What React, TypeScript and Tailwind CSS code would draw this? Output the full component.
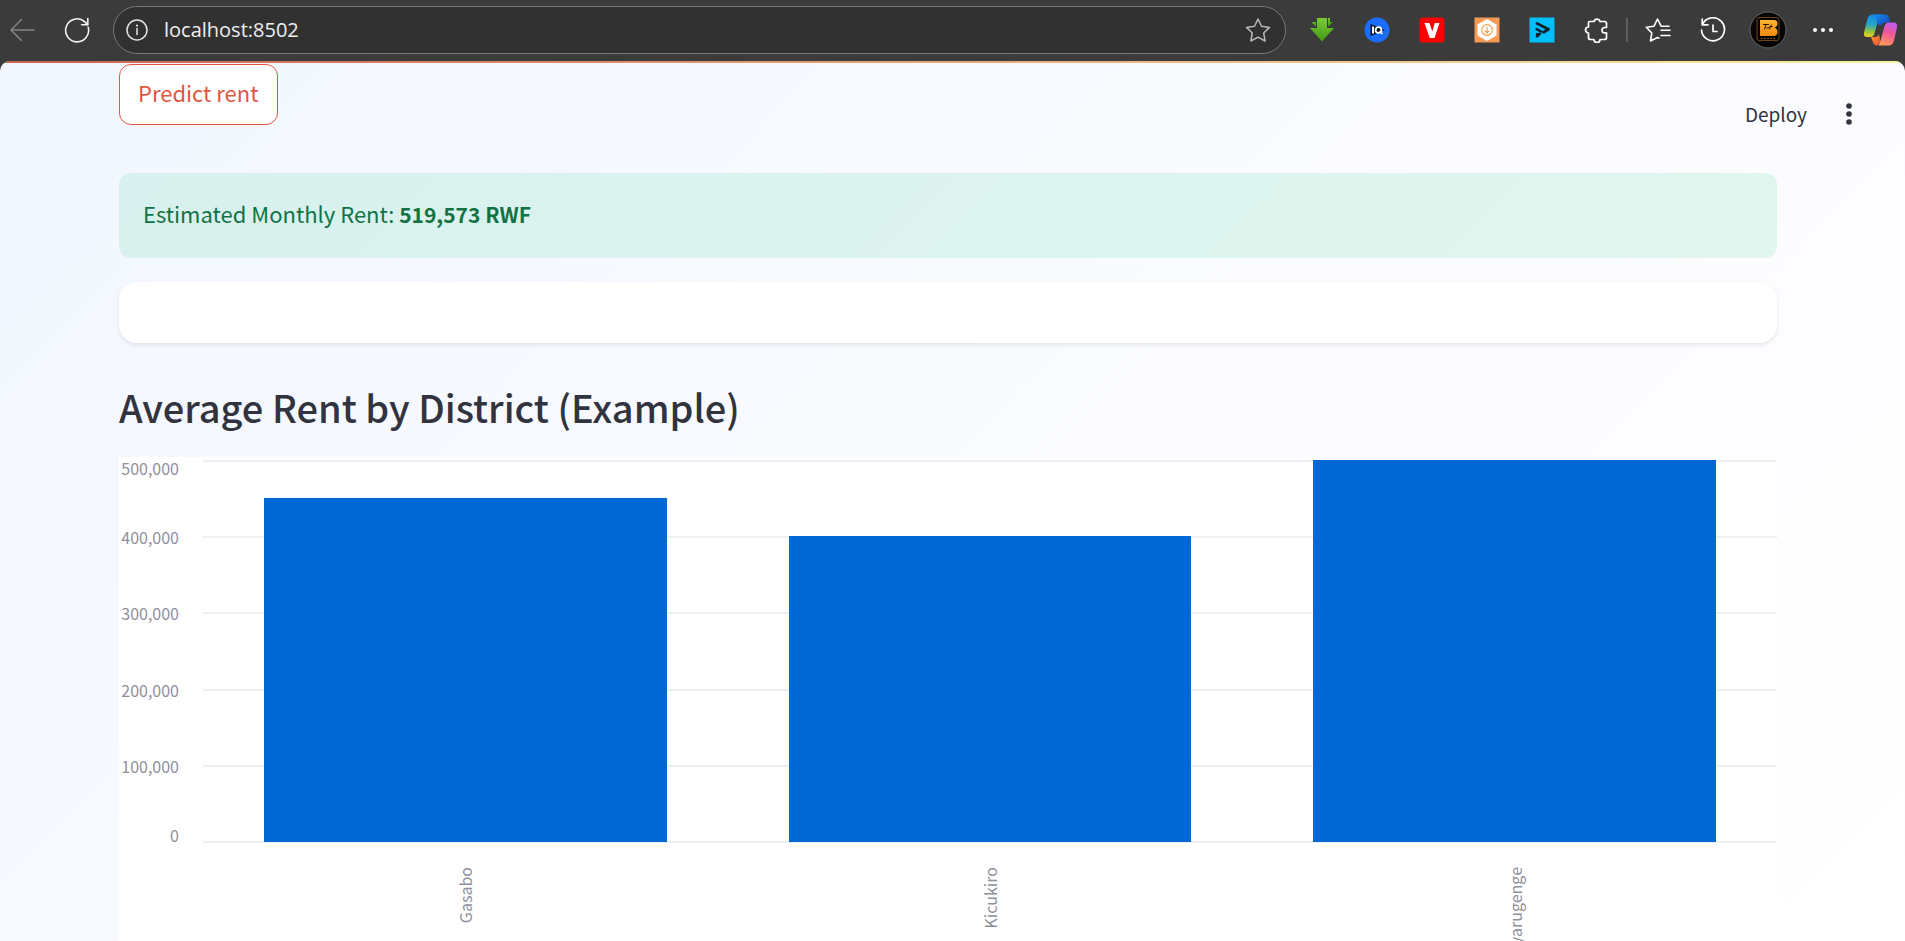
import type { ReactNode } from "react";

const districts = [
  { name: "Gasabo", rent: 450000 },
  { name: "Kicukiro", rent: 400000 },
  { name: "Nyarugenge", rent: 500000 },
];

const ticks = ["500,000", "400,000", "300,000", "200,000", "100,000", "0"];
const maxRent = 500000;

function ToolButton({ label, children }: { label: string; children: ReactNode }) {
  return (
    <button type="button" aria-label={label} className="flex h-9 w-[55px] shrink-0 items-center justify-center">
      {children}
    </button>
  );
}

function BrowserBar() {
  return (
    <header className="flex h-[61px] shrink-0 items-center bg-[#3b3b3b] pb-px text-white">
      <button type="button" aria-label="Back" className="ml-2 flex w-7 justify-center text-[#858585]">
        <svg width="26" height="24" viewBox="0 0 26 24" fill="none" stroke="currentColor" strokeWidth="1.5" strokeLinecap="round" strokeLinejoin="round">
          <path d="M25 12H2M12.500 1.500 2 12l10.500 10.500" />
        </svg>
      </button>
      <button type="button" aria-label="Reload" className="ml-[27px] flex w-7 justify-center text-[#f2f2f2]">
        <svg width="26" height="26" viewBox="0 0 26 26" fill="none" stroke="currentColor" strokeWidth="1.600" strokeLinecap="round" strokeLinejoin="round">
          <path d="M24.200 10.200A11.500 11.500 0 1 1 20.600 4.600L23.600 7.600" />
          <path d="M23.800 1.500v6.200h-6.200" />
        </svg>
      </button>
      <div className="ml-[22px] flex h-12 min-w-0 flex-1 items-center rounded-full border border-[#777] bg-[#313131] pr-3.5 pl-3">
        <button type="button" aria-label="Site information" className="text-[#e4e4e4]">
          <svg width="22" height="22" viewBox="0 0 22 22" fill="none" stroke="currentColor" strokeWidth="1.500">
            <circle cx="11" cy="11" r="10" />
            <path d="M11 9.500v6" strokeLinecap="round" />
            <circle cx="11" cy="6.600" r="1.100" fill="currentColor" stroke="none" />
          </svg>
        </button>
        <input
          aria-label="Address"
          defaultValue="localhost:8502"
          className="ml-4 min-w-0 flex-1 bg-transparent font-['Open_Sans','Noto_Sans',sans-serif] text-[20px] leading-7 text-[#efefef] outline-none"
        />
        <button type="button" aria-label="Add to favorites" className="text-[#b8b8b8]">
          <svg width="26" height="26" viewBox="0 0 26 26" fill="none" stroke="currentColor" strokeWidth="1.500" strokeLinejoin="round">
            <path d="M13 2l3.500 7.300 8 1.100-5.800 5.600 1.400 8L13 20.200 5.900 24l1.400-8L1.500 10.400l8-1.100z" />
          </svg>
        </button>
      </div>

      <nav aria-label="Browser tools" className="ml-2 flex shrink-0 items-center">
        <ToolButton label="Download helper">
          <svg width="24" height="26" viewBox="0 0 24 26">
            <defs>
              <linearGradient id="dl" x1="0" y1="0" x2="0" y2="1">
                <stop offset="0" stopColor="#7cc83a" />
                <stop offset="1" stopColor="#3f9a12" />
              </linearGradient>
            </defs>
            <path d="M4 1h2v4H1.500L5 9h1V1zM20 1h-2v8h1l3.500-4H20z" fill="url(#dl)" />
            <path d="M7 1h10v10h7L12 24.500 0 11h7z" fill="url(#dl)" />
          </svg>
        </ToolButton>
        <ToolButton label="vidIQ">
          <svg width="26" height="26" viewBox="0 0 26 26">
            <circle cx="13" cy="13" r="12.500" fill="#1a6dff" />
            <path d="M6.500 7 21 13 6.500 19z" fill="#0b1020" />
            <path d="M9 9.500v7" stroke="#fff" strokeWidth="2" />
            <circle cx="14.500" cy="13" r="2.900" fill="#0b1020" stroke="#fff" strokeWidth="1.800" />
            <path d="m15.500 14.500 3 2.500" stroke="#fff" strokeWidth="1.600" />
          </svg>
        </ToolButton>
        <ToolButton label="V extension">
          <svg width="26" height="26" viewBox="0 0 26 26">
            <rect x="0.500" y="0.500" width="25" height="25" rx="3" fill="#fe0000" />
            <path d="M5.500 6h5l2.800 8.500L15.800 6h4.700l-5 15h-4.800z" fill="#fff" />
          </svg>
        </ToolButton>
        <ToolButton label="Saver">
          <svg width="26" height="26" viewBox="0 0 26 26" fill="none">
            <path d="M0.500 0.500h25v25H.5z" fill="#f79a55" />
            <path d="m13 2 9.500 5.500v11L13 24l-9.500-5.500v-11z" fill="#fff" />
            <circle cx="13" cy="13" r="5.300" stroke="#f0a04b" strokeWidth="1.200" />
            <path d="M13 9.800v6M10.600 13.600 13 16l2.400-2.400" stroke="#f0a04b" strokeWidth="1.200" />
          </svg>
        </ToolButton>
        <ToolButton label="Player">
          <svg width="26" height="26" viewBox="0 0 26 26" fill="none" strokeLinecap="round" strokeLinejoin="round">
            <path d="M0.500 0.500h25v25H.5z" fill="#00bfff" />
            <path d="m8 6.500 11.500 5.800-5 3" stroke="#10222c" strokeWidth="2.800" />
            <path d="m7.500 12 4.500 2.600M8 17.200v2.300l3-2.600z" stroke="#10222c" strokeWidth="2.400" />
          </svg>
        </ToolButton>
        <ToolButton label="Extensions">
          <svg width="26" height="26" viewBox="0 0 26 26" fill="none" stroke="currentColor" strokeWidth="1.700" strokeLinejoin="round">
            <path d="M5.500 4.500H10a3.100 3.100 0 0 1 6 0h4.500a2 2 0 0 1 2 2v4h-1.800a2.700 2.700 0 0 0 0 5.400h1.800v4.600a2 2 0 0 1-2 2H16a3 3 0 0 1-6 0H6.500a2 2 0 0 1-2-2V16a3 3 0 0 1 0-6V5.500a1 1 0 0 1 1-1z" />
          </svg>
        </ToolButton>
        <span className="mx-0.5 h-6 w-0.5 bg-[#5e5e5e]" />
        <ToolButton label="Favorites">
          <svg width="26" height="26" viewBox="0 0 26 26" fill="none" stroke="currentColor" strokeWidth="1.600" strokeLinecap="round" strokeLinejoin="round">
            <path d="M14 21.200 12.500 20.500 5.500 24l1.300-8L1.300 10.300l7.700-1.100L12.500 2l3.600 7.200H24M16 13.200h9M16 18.500h9" />
          </svg>
        </ToolButton>
        <ToolButton label="History">
          <svg width="26" height="26" viewBox="0 0 26 26" fill="none" stroke="currentColor" strokeWidth="1.700" strokeLinecap="round" strokeLinejoin="round">
            <path d="M2.500 7.500A11.500 11.500 0 1 1 1.500 13M2.200 2v5.800H8M13 8v6.500h4" />
          </svg>
        </ToolButton>
        <ToolButton label="Profile">
          <svg width="38" height="38" viewBox="0 0 38 38">
            <defs>
              <linearGradient id="gold" x1="0" y1="0" x2="0" y2="1">
                <stop offset="0" stopColor="#ffb52e" />
                <stop offset="1" stopColor="#f08a10" />
              </linearGradient>
            </defs>
            <circle cx="19" cy="19" r="18" fill="#050505" stroke="#666" strokeWidth="1" />
            <rect x="8" y="6.500" width="22" height="23" rx="2" fill="none" stroke="#70421a" strokeWidth="1" />
            <path d="M11 9h14a3.500 3.500 0 0 1 3.500 3.500q0 3-3 4 3 1 3 4.500a3.500 3.500 0 0 1-3.500 4H11z" fill="url(#gold)" />
            <path d="M14 13.500h6m-3 0-1.500 5m2-1.500 3-.5m0 2 2-5m-2 2h3" stroke="#27160a" strokeWidth="1" fill="none" />
            <path d="M12 27.500h14" stroke="#8a4c14" strokeWidth="1" strokeDasharray="2 1" />
          </svg>
        </ToolButton>
        <ToolButton label="Settings and more">
          <svg width="24" height="8" viewBox="0 0 24 8" fill="currentColor">
            <circle cx="4" cy="4" r="2" />
            <circle cx="12" cy="4" r="2" />
            <circle cx="20" cy="4" r="2" />
          </svg>
        </ToolButton>
        <button type="button" aria-label="Copilot" className="flex w-[55px] shrink-0 justify-end pr-[7px]">
          <svg width="35" height="32" viewBox="0 0 35 32">
            <defs>
              <linearGradient id="cpA" x1="0.400" y1="0" x2="0.300" y2="1">
                <stop offset="0" stopColor="#1388e8" />
                <stop offset="0.450" stopColor="#27a5c9" />
                <stop offset="0.750" stopColor="#8fc23e" />
                <stop offset="1" stopColor="#f2cf1c" />
              </linearGradient>
              <linearGradient id="cpB" x1="0.700" y1="0" x2="0.400" y2="1">
                <stop offset="0" stopColor="#c05cf0" />
                <stop offset="0.450" stopColor="#f0569b" />
                <stop offset="1" stopColor="#ff9a5c" />
              </linearGradient>
              <linearGradient id="cpC" x1="0" y1="0" x2="1" y2="1">
                <stop offset="0" stopColor="#1388e8" />
                <stop offset="1" stopColor="#1a45c0" />
              </linearGradient>
              <linearGradient id="cpD" x1="0" y1="0" x2="1" y2="1">
                <stop offset="0" stopColor="#f7a02a" />
                <stop offset="1" stopColor="#f0493a" />
              </linearGradient>
            </defs>
            <path d="M9.500 .5H19q-2.500 0-3.300 3L11.500 19.500q-1 3.500-4.500 3.500H4.500Q0 23 1 18.500L4.400 5Q5.500.5 9.500.5z" fill="url(#cpA)" />
            <path d="M12 .5h10q3 0 3.800 3L27 8.500h-4.500q-3 0-4.200 3L15 10.500z" fill="url(#cpC)" />
            <path d="M8 23h4q3 0 4-3l1.500 8-3.500 3.500q-3 0-3.800-3z" fill="url(#cpD)" />
            <path d="M25.500 31.500H14q2.200-.3 3-3l4.500-16.500q1-3.500 4.500-3.500h4.500q4.500 0 3.500 5L31 26.500q-1.200 5-5.500 5z" fill="url(#cpB)" />
          </svg>
        </button>
      </nav>
    </header>
  );
}

function RentChart() {
  return (
    <figure aria-label="Average rent by district" className="mt-[26px] bg-white pt-[3px]">
      <div className="grid h-[383px] grid-cols-[60px_1fr] gap-x-6">
        <div className="grid grid-rows-[1fr_2fr_2fr_2fr_2fr_1fr] text-right text-base leading-4 text-[#8f909c]">
          {ticks.map((tick) => (
            <span key={tick} className="self-center first:self-start last:self-end">
              {tick}
            </span>
          ))}
        </div>
        <div className="grid">
          <div className="col-start-1 row-start-1 flex flex-col border-b-2 border-[#eeeff4]">
            {ticks.slice(1).map((tick) => (
              <div key={tick} className="flex-1 border-t-2 border-[#eeeff4]" />
            ))}
          </div>
          <div className="col-start-1 row-start-1 grid grid-cols-3 items-end pb-px">
            {districts.map((d) => (
              <div
                key={d.name}
                className="mx-[61px] bg-[#0068d4]"
                style={{ height: `${(d.rent / maxRent) * 100}%` }}
              />
            ))}
          </div>
        </div>
      </div>
      <div className="ml-[84px] grid grid-cols-3 pt-6">
        {districts.map((d) => (
          <div key={d.name} className="flex items-start justify-center">
            <span className="rotate-180 text-base leading-6 text-[#8f909c] [writing-mode:vertical-rl]">{d.name}</span>
          </div>
        ))}
      </div>
    </figure>
  );
}

export default function App() {
  return (
    <div className="flex h-screen flex-col overflow-hidden bg-[#3b3b3b] font-['Noto_Sans_CJK_SC',sans-serif]">
      <BrowserBar />
      <div className="relative min-h-0 flex-1 overflow-hidden rounded-t-[10px] bg-linear-135 from-[#f1f6ff] via-[#fafbff] via-50% to-white">
        <div className="h-0.5 bg-linear-to-r from-[#c9604f] to-[#f7f0a0]" />
        <div className="absolute top-[35px] right-[42px] flex items-center gap-[28px] text-[#31333f]">
          <button type="button" className="text-[19px] leading-9">
            Deploy
          </button>
          <button type="button" aria-label="Main menu" className="flex w-7 justify-center">
            <svg width="6" height="22" viewBox="0 0 6 22" fill="currentColor">
              <circle cx="3" cy="3" r="2.800" />
              <circle cx="3" cy="11" r="2.800" />
              <circle cx="3" cy="19" r="2.800" />
            </svg>
          </button>
        </div>
        <main className="mr-32 ml-[119px] pt-px">
          <button type="button" className="block h-[61px] rounded-xl border border-[#e2553f] bg-white px-[18px] pb-1 text-[22px] text-[#e2553f]">
            Predict rent
          </button>
          <p role="status" className="mt-12 rounded-xl bg-[#24ca7c21] px-6 pt-[22px] pb-[26px] text-[22px] leading-[37px] text-[#117344]">
            Estimated Monthly Rent: <strong className="text-[21px] leading-none font-bold">519,573 RWF</strong>
          </p>
          <div className="mt-6 h-[61px] rounded-[18px] bg-white shadow-[0_2px_4px_rgba(0,0,0,0.09)]" />
          <h2 className="mt-[39px] text-[38px] leading-[49px] font-medium text-[#31333f]">Average Rent by District (Example)</h2>
          <RentChart />
        </main>
      </div>
    </div>
  );
}
